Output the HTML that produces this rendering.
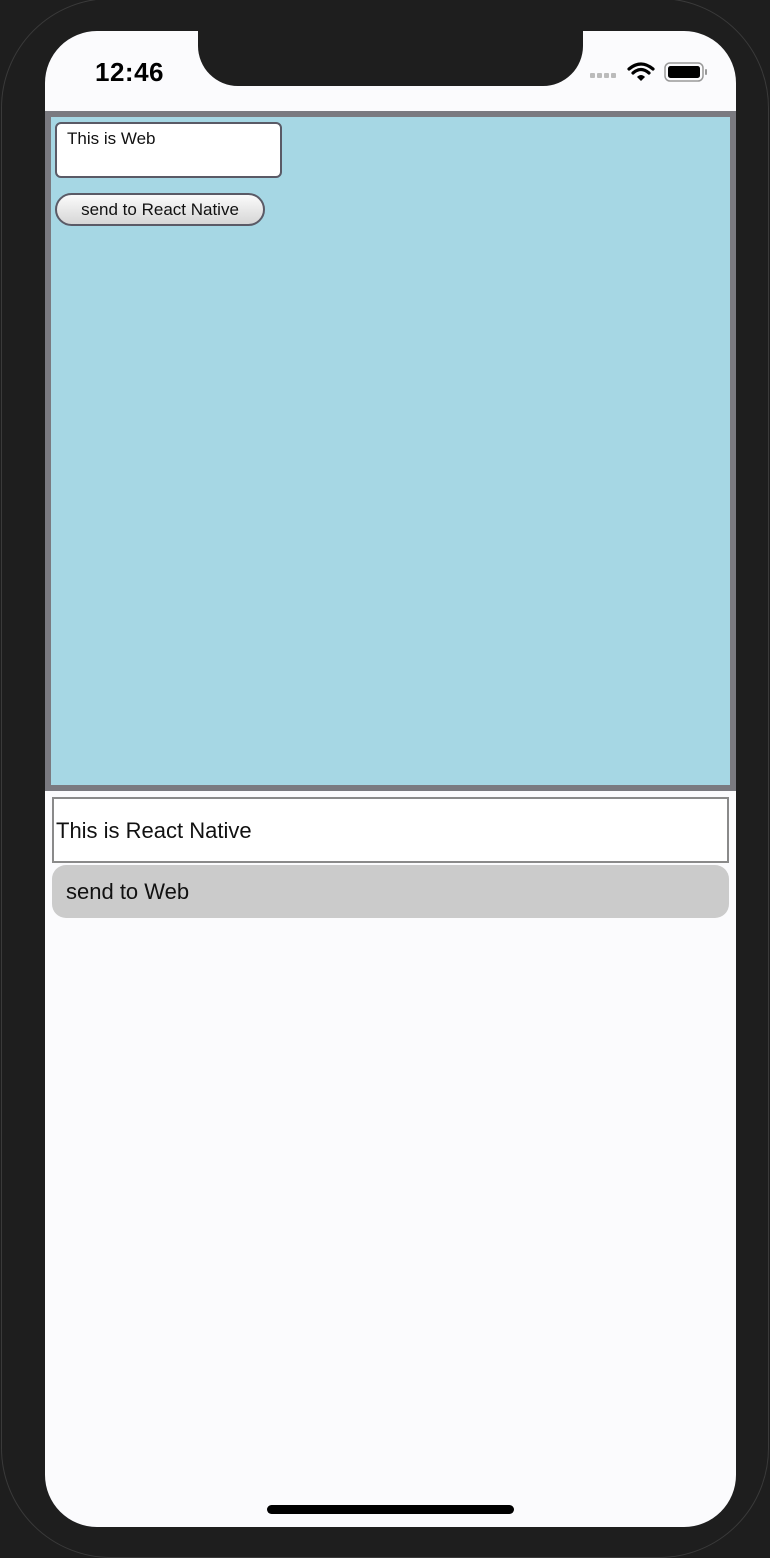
<!DOCTYPE html>
<html><head><meta charset="utf-8"><style>
*{margin:0;padding:0;box-sizing:border-box}
body{width:770px;height:1554px;background:#1e1e1e;position:relative;overflow:hidden;font-family:"Liberation Sans",sans-serif}
.outer{position:absolute;left:1px;top:-2px;width:768px;height:1560px;border:1px solid #3a3a3a;border-radius:110px}
.screen{position:absolute;left:45px;top:31px;width:691px;height:1496px;background:#fbfbfd;border-radius:52px;overflow:hidden}
.notch{position:absolute;left:198px;top:28px;width:385px;height:58px;background:#1e1e1e;border-radius:0 0 40px 40px}
.notch:before,.notch:after{content:"";position:absolute;top:0;width:16px;height:16px}
.time{position:absolute;left:95px;top:57px;font-size:26px;font-weight:bold;color:#000;letter-spacing:0.5px}
.web{position:absolute;left:45px;top:111px;width:691px;height:680px;background:#7a7a80;padding:6px}
.web .in{width:100%;height:100%;background:#a6d7e4;position:relative}
.ta{position:absolute;left:4px;top:5px;width:227px;height:56px;background:#fff;border:2px solid #5a5a66;border-radius:6px;font-size:17px;padding:5px 10px;color:#111}
.btn{position:absolute;left:4px;top:76px;width:210px;height:33px;border:2px solid #5a5a66;border-radius:17px;background:linear-gradient(#fbfbfb,#d6d6d6);font-size:17px;text-align:center;line-height:29px;color:#111}
.rn{position:absolute;left:52px;top:797px;width:677px;height:66px;border:2px solid #8a8a8a;background:#fff;font-size:22px;line-height:64px;padding-left:2px;color:#111}
.rb{position:absolute;left:52px;top:865px;width:677px;height:53px;background:#cbcbcb;border-radius:14px;font-size:22px;line-height:53px;padding-left:14px;color:#111}
.home{position:absolute;left:267px;top:1505px;width:247px;height:9px;background:#000;border-radius:5px}
</style></head><body>
<div class="outer"></div>
<div class="screen"></div>
<div class="notch"></div>
<div class="time">12:46</div>
<svg style="position:absolute;left:588px;top:60px" width="125" height="26" viewBox="0 0 125 26">
<g fill="#bbb"><rect x="2" y="13" width="5" height="5" rx="1"/><rect x="9" y="13" width="5" height="5" rx="1"/><rect x="16" y="13" width="5" height="5" rx="1"/><rect x="23" y="13" width="5" height="5" rx="1"/></g>
<path d="M41 9 Q53 -1 65 9" stroke="#000" stroke-width="3.2" fill="none" stroke-linecap="round"/>
<path d="M45 13 Q53 6 61 13" stroke="#000" stroke-width="3.2" fill="none" stroke-linecap="round"/>
<path d="M53 21 L49 17 Q53 13 57 17 Z" fill="#000"/>
<rect x="77" y="3" width="38" height="18" rx="5" fill="none" stroke="#999" stroke-width="1.5"/>
<rect x="80" y="6" width="32" height="12" rx="2.5" fill="#000"/>
<rect x="117" y="9" width="2" height="6" rx="1" fill="#999"/>
</svg>
<div class="web"><div class="in">
<div class="ta">This is Web</div>
<div class="btn">send to React Native</div>
</div></div>
<div class="rn">This is React Native</div>
<div class="rb">send to Web</div>
<div class="home"></div>
</body></html>
